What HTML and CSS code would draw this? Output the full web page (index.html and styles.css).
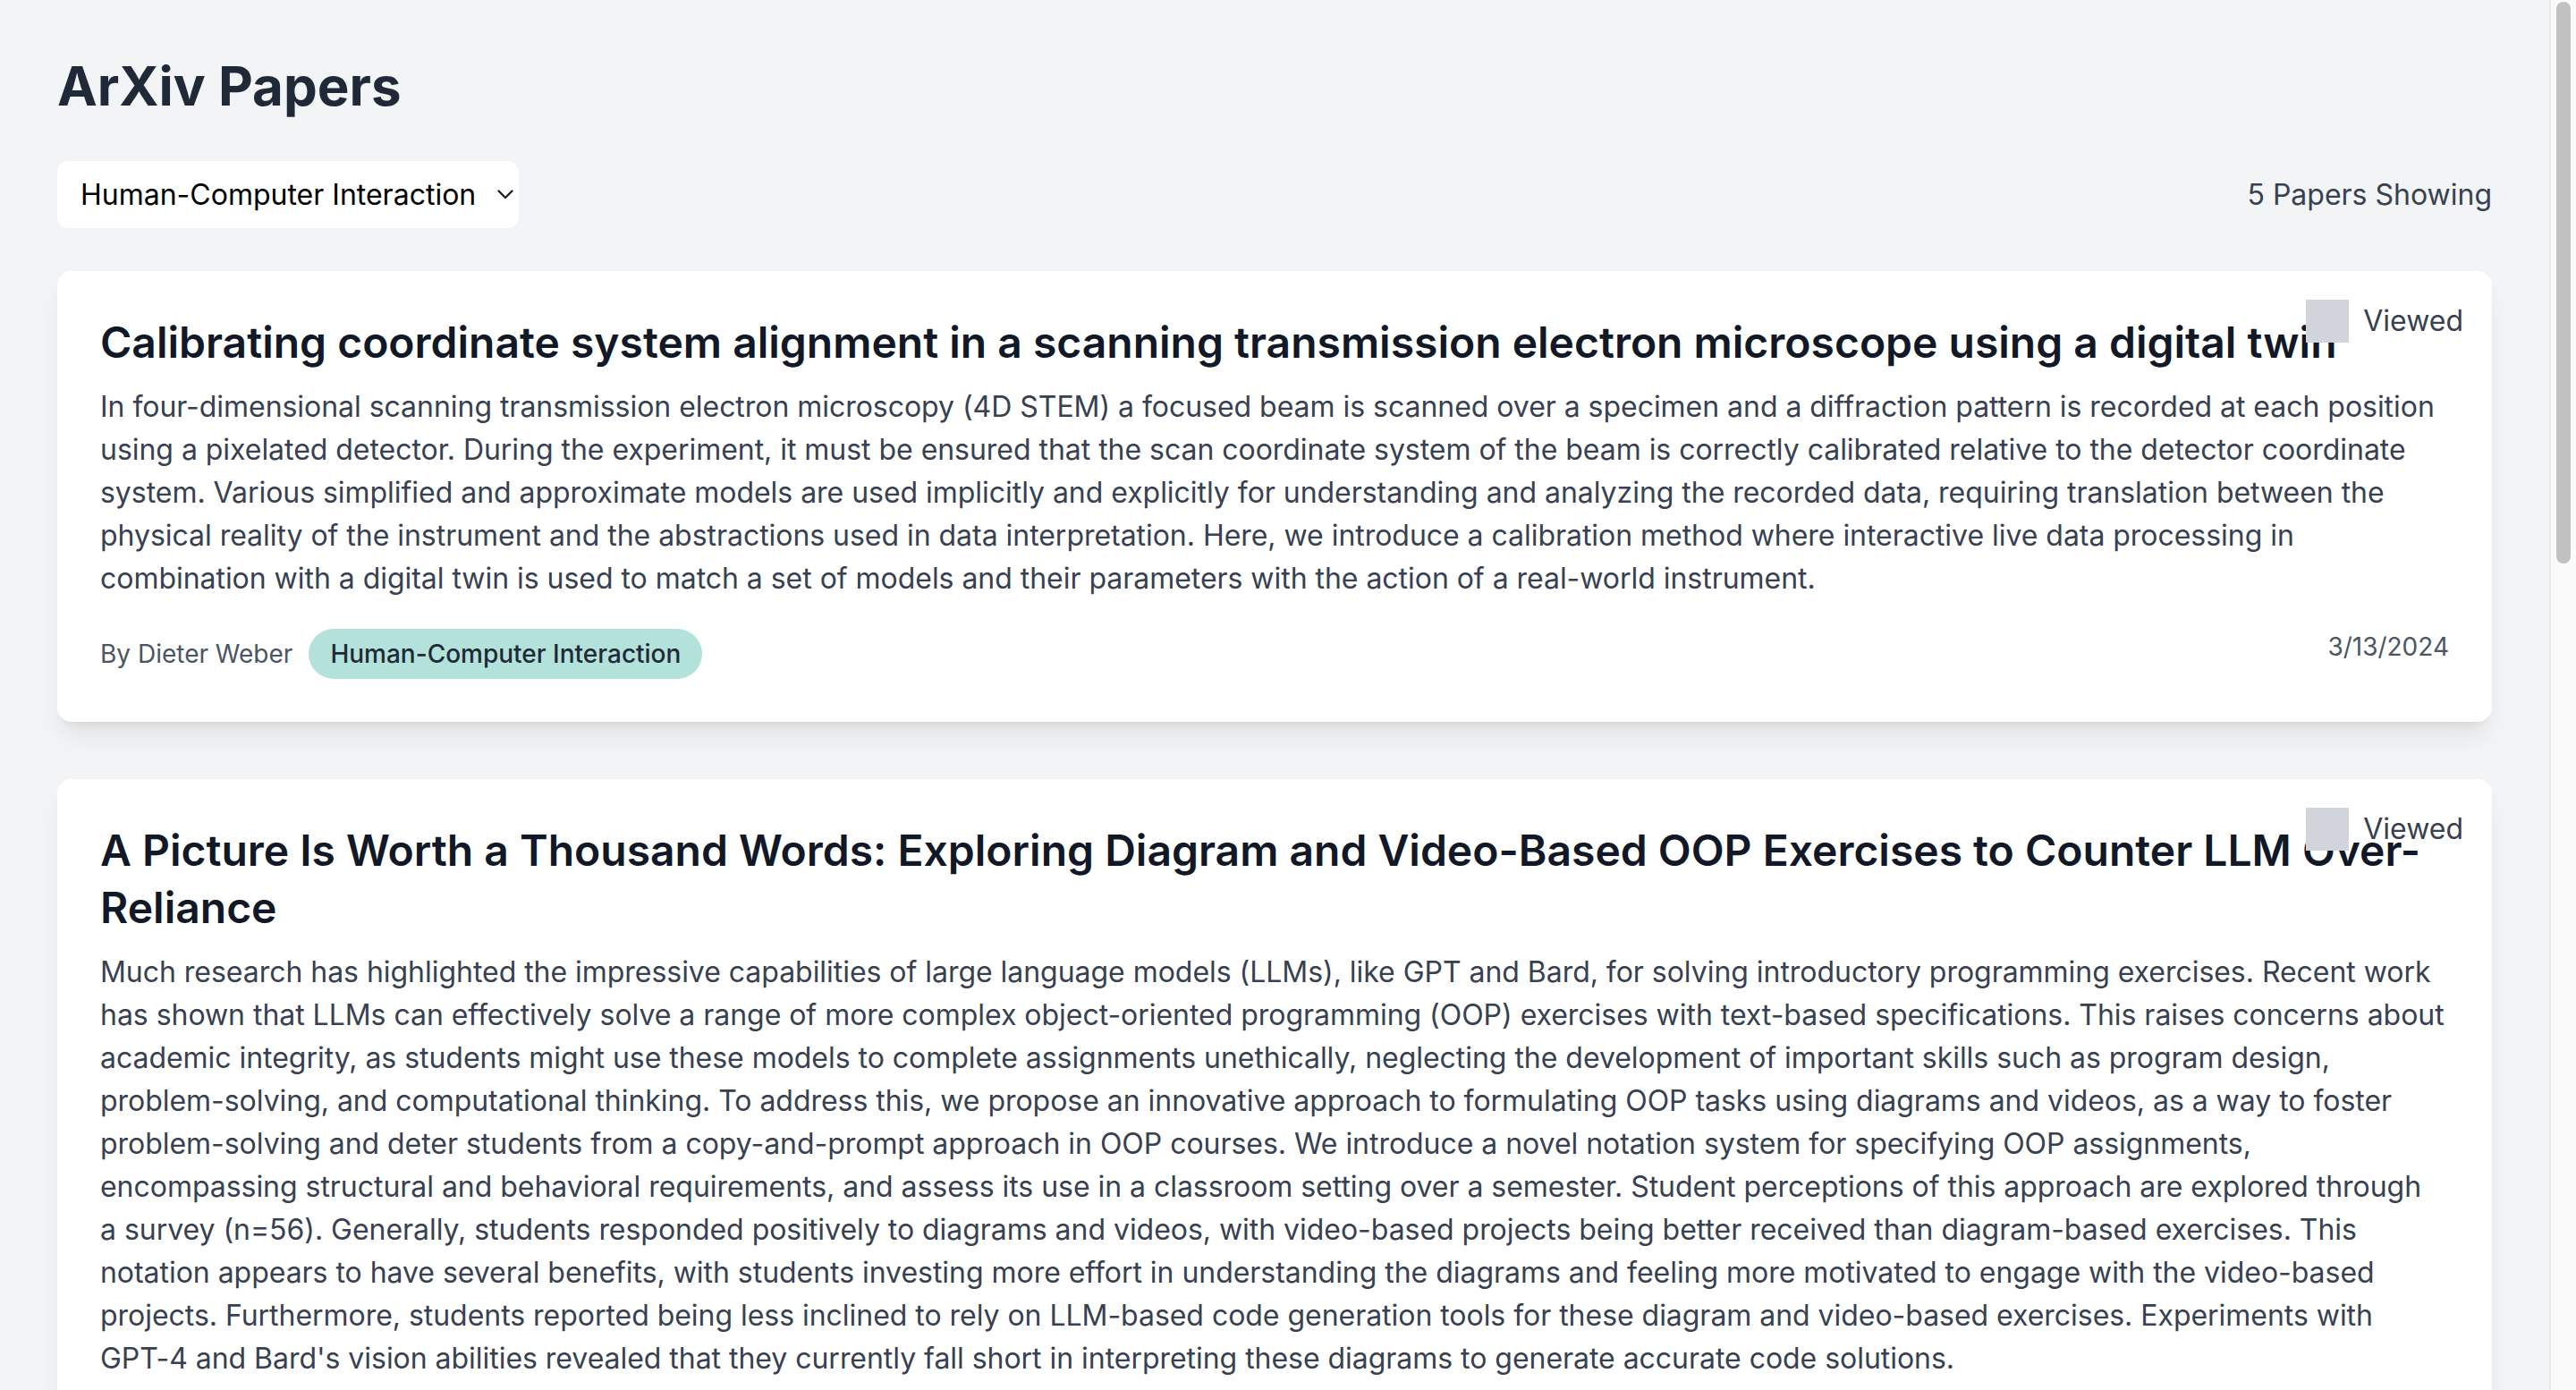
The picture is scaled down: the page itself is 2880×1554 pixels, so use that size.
FILE: index.html
```html
<!DOCTYPE html>
<html lang="en">
<head>
<meta charset="utf-8">
<title>ArXiv Papers</title>
<link rel="stylesheet" href="styles.css">
</head>
<body>
<main class="page">
  <h1 class="page-title">ArXiv Papers</h1>
  <div class="toolbar">
    <div class="select-wrap">
      <select class="category-select">
        <option>All Categories</option>
        <option>Artificial Intelligence</option>
        <option selected>Human-Computer Interaction</option>
        <option>Machine Learning</option>
      </select>
      <svg class="select-chevron" width="18" height="11" viewBox="0 0 18 11"><polyline points="1.5,1.5 9,9 16.5,1.5" fill="none" stroke="#222" stroke-width="2.4" stroke-linecap="round" stroke-linejoin="round"/></svg>
    </div>
    <div class="count">5 Papers Showing</div>
  </div>

  <div class="paper-list">
    <article class="card">
      <label class="viewed"><input type="checkbox" class="viewed-box"><span>Viewed</span></label>
      <h2 class="card-title">Calibrating coordinate system alignment in a scanning transmission electron microscope using a digital twin</h2>
      <p class="abstract">In four-dimensional scanning transmission electron microscopy (4D STEM) a focused beam is scanned over a specimen and a diffraction pattern is recorded at each position using a pixelated detector. During the experiment, it must be ensured that the scan coordinate system of the beam is correctly calibrated relative to the detector coordinate system. Various simplified and approximate models are used implicitly and explicitly for understanding and analyzing the recorded data, requiring translation between the physical reality of the instrument and the abstractions used in data interpretation. Here, we introduce a calibration method where interactive live data processing in combination with a digital twin is used to match a set of models and their parameters with the action of a real-world instrument.</p>
      <div class="card-footer">
        <div class="meta">
          <span class="author">By Dieter Weber</span>
          <span class="badge">Human-Computer Interaction</span>
        </div>
        <span class="date">3/13/2024</span>
      </div>
    </article>

    <article class="card">
      <label class="viewed"><input type="checkbox" class="viewed-box"><span>Viewed</span></label>
      <h2 class="card-title">A Picture Is Worth a Thousand Words: Exploring Diagram and Video-Based OOP Exercises to Counter LLM Over-Reliance</h2>
      <p class="abstract">Much research has highlighted the impressive capabilities of large language models (LLMs), like GPT and Bard, for solving introductory programming exercises. Recent work has shown that LLMs can effectively solve a range of more complex object-oriented programming (OOP) exercises with text-based specifications. This raises concerns about academic integrity, as students might use these models to complete assignments unethically, neglecting the development of important skills such as program design, problem-solving, and computational thinking. To address this, we propose an innovative approach to formulating OOP tasks using diagrams and videos, as a way to foster problem-solving and deter students from a copy-and-prompt approach in OOP courses. We introduce a novel notation system for specifying OOP assignments, encompassing structural and behavioral requirements, and assess its use in a classroom setting over a semester. Student perceptions of this approach are explored through a&nbsp;survey (n=56). Generally, students responded positively to diagrams and videos, with video-based projects being better received than diagram-based exercises. This notation appears to have several benefits, with students investing more effort in understanding the diagrams and feeling more motivated to engage with the video-based projects. Furthermore, students reported being less inclined to rely on LLM-based code generation tools for these diagram and video-based exercises. Experiments with GPT-4 and Bard's vision abilities revealed that they currently fall short in interpreting these diagrams to generate accurate code solutions.</p>
      <div class="card-footer">
        <div class="meta">
          <span class="author">By Bruno Pereira Cipriano</span>
          <span class="badge">Human-Computer Interaction</span>
        </div>
        <span class="date">3/13/2024</span>
      </div>
    </article>

    <article class="card">
      <label class="viewed"><input type="checkbox" class="viewed-box"><span>Viewed</span></label>
      <h2 class="card-title">Designing Conversational Agents for Older Adults: A Participatory Study of Everyday Needs</h2>
      <p class="abstract">Conversational agents are increasingly present in the homes of older adults, yet their design rarely reflects the routines, values and concerns of this population. We report on a series of participatory design workshops with twenty-four older adults living independently, in which participants envisioned, critiqued and refined scenarios of use for voice-based assistants. Our analysis surfaces tensions between convenience and autonomy, the importance of conversational repair when misunderstandings occur, and the desire for agents that support social connection rather than replace it. Participants favoured assistants that explain their reasoning, remember preferences over time, and defer to human caregivers for sensitive decisions.</p>
      <div class="card-footer">
        <div class="meta">
          <span class="author">By Maria Lindqvist</span>
          <span class="badge">Human-Computer Interaction</span>
        </div>
        <span class="date">3/12/2024</span>
      </div>
    </article>
  </div>
</main>
<div class="scrollbar" aria-hidden="true">
  <div class="scrollbar-thumb"></div>
</div>
</body>
</html>
```

FILE: styles.css
```css
* {
  box-sizing: border-box;
}

html,
body {
  height: 100%;
}

body {
  margin: 0;
  display: flex;
  overflow: hidden;
  background: #f3f4f6;
  font-family: "Inter", "Liberation Sans", sans-serif;
  color: #1f2937;
}

.page {
  flex: 1;
  min-width: 0;
  overflow: hidden;
  padding: 60px 64px 64px;
}

.scrollbar {
  flex: none;
  width: 30px;
  height: 100%;
  background: #fafafa;
  border-left: 2px solid #e9e9e9;
  padding: 2px 6px 0 6px;
}

.scrollbar-thumb {
  height: 628px;
  border-radius: 8px;
  background: #c1c1c1;
}

.page-title {
  margin: 0 0 48px;
  font-size: 60px;
  line-height: 72px;
  font-weight: 700;
  color: #1f2937;
}

.toolbar {
  display: flex;
  justify-content: space-between;
  align-items: center;
  margin-bottom: 48px;
}

.select-wrap {
  position: relative;
  display: flex;
}

.category-select {
  appearance: none;
  -webkit-appearance: none;
  height: 75px;
  padding: 0 47px 0 26px;
  border: none;
  border-radius: 12px;
  background: #ffffff;
  font-family: "Inter", "Liberation Sans", sans-serif;
  font-size: 32px;
  color: #000000;
  outline: none;
}

.select-chevron {
  position: absolute;
  right: 6px;
  top: 32px;
  pointer-events: none;
}

.count {
  font-size: 32px;
  line-height: 48px;
  color: #374151;
}

.paper-list {
  display: flex;
  flex-direction: column;
  gap: 64px;
}

.card {
  position: relative;
  background: #ffffff;
  border-radius: 16px;
  padding: 48px;
  box-shadow: 0 20px 30px -6px rgba(0, 0, 0, 0.08), 0 8px 12px -8px rgba(0, 0, 0, 0.1);
}

.viewed {
  position: absolute;
  top: 32px;
  right: 32px;
  display: flex;
  align-items: center;
  gap: 16px;
  font-size: 32px;
  line-height: 48px;
  color: #374151;
}

.viewed-box {
  appearance: none;
  -webkit-appearance: none;
  margin: 0;
  width: 48px;
  height: 48px;
  background: #d1d5db;
  border: none;
  border-radius: 0;
}

.card-title {
  margin: 0 0 16px;
  font-size: 48px;
  line-height: 64px;
  font-weight: 600;
  color: #111827;
}

.abstract {
  margin: 0;
  font-size: 32px;
  line-height: 48px;
  letter-spacing: -0.035px;
  color: #374151;
}

.card-footer {
  margin-top: 32px;
  display: flex;
  justify-content: space-between;
  align-items: flex-start;
}

.meta {
  display: flex;
  align-items: center;
  gap: 18px;
}

.author {
  font-size: 28px;
  line-height: 40px;
  color: #4b5563;
}

.badge {
  padding: 8px 24px;
  border-radius: 9999px;
  background: #b2e2d9;
  font-size: 28px;
  line-height: 40px;
  font-weight: 500;
  color: #1f2937;
}

.date {
  font-size: 28px;
  line-height: 40px;
  color: #4b5563;
}
```
